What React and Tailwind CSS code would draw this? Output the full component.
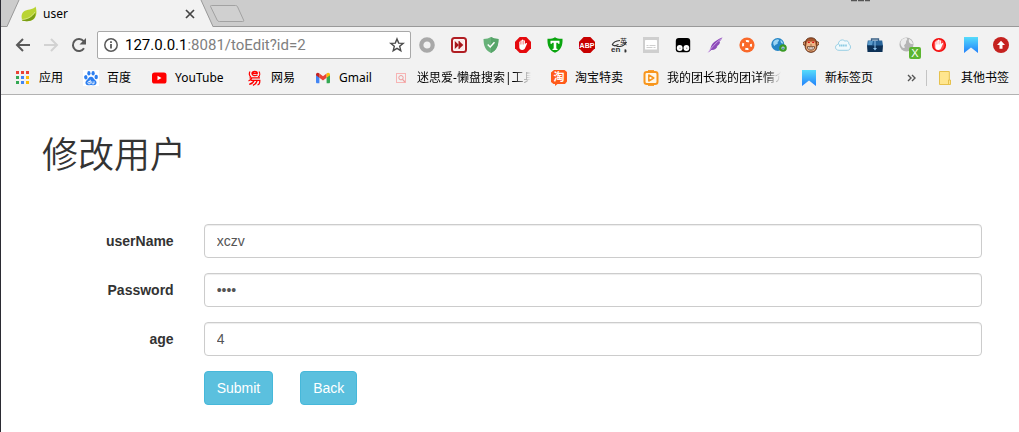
import { useState } from "react";

const Icon = ({ children, size = 16 }) => (
  <svg width={size} height={size} viewBox="0 0 16 16" className="shrink-0" aria-hidden="true">
    {children}
  </svg>
);

/* ---------- toolbar glyphs ---------- */

const BackArrow = ({ color = "#5a5a5a" }) => (
  <Icon>
    <path d="M15 8H2.5M8 2 2 8l6 6" fill="none" stroke={color} strokeWidth="2" />
  </Icon>
);
const ForwardArrow = () => (
  <Icon>
    <path d="M1 8h12.5M8 2l6 6-6 6" fill="none" stroke="#d2d2d2" strokeWidth="2" />
  </Icon>
);
const Reload = () => (
  <Icon>
    <path d="M13 11.2A6 6 0 1 1 12.6 4.2" fill="none" stroke="#5a5a5a" strokeWidth="2" />
    <path d="M15 1v6.5H8.5z" fill="#5a5a5a" />
  </Icon>
);
const Info = () => (
  <Icon>
    <circle cx="8" cy="8" r="6.2" fill="none" stroke="#5a5a5a" strokeWidth="1.5" />
    <path d="M7.1 7h1.8v4.5H7.1zM7.1 4.3h1.8v1.6H7.1z" fill="#5a5a5a" />
  </Icon>
);
const Star = () => (
  <Icon>
    <path
      d="M8 1.9l1.7 4.2 4.5.3-3.5 2.9 1.1 4.4L8 11.3l-3.8 2.4 1.1-4.4L1.8 6.4l4.5-.3z"
      fill="none"
      stroke="#4a4a4a"
      strokeWidth="1.4"
    />
  </Icon>
);
const Leaf = () => (
  <Icon>
    <path d="M14.5.6c1.3 3.6 1.6 8.8-1.2 11.9-2.6 2.9-7 3.2-11.8 2.3-1.5-3-1.3-7 1.3-9.2C5.7 3.2 12 4.4 14.5.6z" fill="#b9d432" />
    <path d="M.7 13.6c4.3.3 9.6-1.2 13.7-7.4.3 3-.2 5-1.9 6.8-2.9 2.6-7 2.4-11 1.8z" fill="#7a9e14" />
    <path d="M.7 13.5c5-.2 10-2.2 13.3-7.5" fill="none" stroke="#e4eda4" strokeWidth=".7" />
  </Icon>
);

/* ---------- extension icons ---------- */

const Ring = () => (
  <Icon>
    <circle cx="8" cy="8" r="5.7" fill="#f2f2f2" stroke="#a9a9a9" strokeWidth="4.2" />
  </Icon>
);
const FastForward = () => (
  <Icon>
    <rect x="1" y="1" width="14" height="14" rx="2.5" fill="#fff" stroke="#b01e23" strokeWidth="2" />
    <rect x="2.6" y="2.6" width="10.8" height="10.8" rx="1" fill="#fbeaea" />
    <path d="M3.8 4 8 8l-4.2 4zM8 4l4.3 4L8 12z" fill="#a8161b" />
    <path d="M8 4v8" stroke="#a8161b" strokeWidth="1" />
  </Icon>
);
const Shield = () => (
  <Icon>
    <path d="M8 0c2 1.3 4.5 1.9 7.5 2-.1 6.3-1.5 11-7.5 14C2 13 .6 8.3.5 2 3.5 1.9 6 1.3 8 0z" fill="#67b279" />
    <path d="M8 0c2 1.3 4.5 1.9 7.5 2-.1 6.3-1.5 11-7.5 14z" fill="#58a56a" />
    <path d="M4.7 7.5 7.2 10l4.3-4.8" fill="none" stroke="#fff" strokeWidth="1.4" />
  </Icon>
);
const Hand = ({ pale }) => (
  <Icon>
    {pale ? (
      <circle cx="8" cy="8" r="6.3" fill="#ff4a4a" stroke="#f20d0d" strokeWidth="1.6" />
    ) : (
      <path d="M4.7 0h6.6L16 4.7v6.6L11.3 16H4.7L0 11.3V4.7z" fill="#e50a0e" />
    )}
    <path
      d="M4.3 7.6V5.1c0-.9 1.2-.9 1.2 0V4c0-1 1.4-1 1.4 0v-.8c0-1 1.5-1 1.5 0V4c0-1 1.5-1 1.5 0v3.3l.8-1c.8-.8 1.6-.2 1.2.6l-1.9 4.3c-.5 1.2-1.3 1.7-2.7 1.7-2.3 0-3-1.4-3-3z"
      fill="#fff"
    />
    <path d="M5.6 5v2.5M7 4v3.5M8.5 4v3.5" stroke={pale ? "#ff7777" : "#e50a0e"} strokeWidth=".4" />
  </Icon>
);
const GreenT = () => (
  <Icon>
    <path d="M.5 1.8C3.5 2 6 1.5 8 .3c2 1.2 4.5 1.7 7.5 1.5.4 6.5-1.5 11.5-7.5 14C2 13.3.1 8.3.5 1.8z" fill="#0aa50f" />
    <path d="M3.5 3.8h9v3h-1.4l-.4-1H9.3v5.7l1.2.5v1h-5v-1l1.2-.5V5.8H5.3l-.4 1H3.5z" fill="#fff" />
  </Icon>
);
const Abp = () => (
  <Icon>
    <path d="M4.7 0h6.6L16 4.7v6.6L11.3 16H4.7L0 11.3V4.7z" fill="#c70000" />
    <text x="8" y="10.500" textAnchor="middle" fontSize="7" fontWeight="700" fill="#fff" fontFamily="Liberation Sans, sans-serif">
      ABP
    </text>
  </Icon>
);
const Translate = () => (
  <Icon>
    <text x="0" y="15.300" fontSize="8" fontWeight="700" fill="#333" fontFamily="Liberation Sans, sans-serif">en</text>
    <text x="9" y="6.500" fontSize="7" fill="#222" fontFamily="Noto Sans CJK SC, sans-serif">英</text>
    <path d="M1.200 8C2 5.500 5 3.800 9 3.500M1.200 8 4 8.800l3.500-1.300M5.500 9.300c4 .8 8-.8 9.500-3.500l-2 .2" fill="none" stroke="#333" strokeWidth="1.200" />
    <path d="M13.500 12.500a1.500 1.500 0 1 1 0 2.800z" fill="#333" />
  </Icon>
);
const Caption = () => (
  <Icon>
    <path d="M0 0h16v16H0z" fill="#cfcfcf" />
    <rect x="2" y="3" width="12" height="9.500" rx=".6" fill="#fff" />
    <path d="M3.500 8.500h2m1 0h6M3.500 10.500h6m1 0h2" stroke="#cfcfcf" strokeWidth="1" />
  </Icon>
);
const Tamper = () => (
  <Icon>
    <rect x=".8" y="1" width="14.400" height="14.200" rx="3" fill="#000" />
    <circle cx="4.700" cy="11" r="2.900" fill="#fff" />
    <circle cx="11.400" cy="11" r="2.900" fill="#fff" />
    <circle cx="5" cy="11.300" r=".7" fill="#999" />
    <circle cx="11.700" cy="11.300" r=".7" fill="#999" />
  </Icon>
);
const Feather = () => (
  <Icon>
    <path d="M15.500.5c-2 .6-8.300 3.500-10.500 7C3.800 9.500 3.300 12 3.300 12l-2 3.500 3-2.600c3 .3 5.200-1.400 6.200-3.400l-1-.1c2-1 3.500-3 3.500-4.500l-.8.100c1.500-1.500 2.500-3 3.300-4.500z" fill="#8d4bb8" />
    <path d="M1 15.500C4 11 9 5.500 14.500 1.500" fill="none" stroke="#d9b3ef" strokeWidth=".8" />
  </Icon>
);
const OrangeReel = () => (
  <Icon>
    <circle cx="8" cy="8" r="7.600" fill="#f9692a" />
    <circle cx="8" cy="8" r="4" fill="none" stroke="#fff" strokeWidth="2" strokeDasharray="3.200 3.083" strokeDashoffset="1.600" />
  </Icon>
);
const Globe = () => (
  <Icon>
    <circle cx="6.800" cy="7.500" r="6.500" fill="#2686c6" />
    <path d="M2.500 4.500c2-2.300 5-2.700 5.500-1.500s-1.800 1.500-1.300 3-2.200 1-2.700 2.500-2.500-1.500-1.500-4zM9.500 3c1.200.6 2.600 2 2.800 3.500-1.500 0-3-.5-2.800-3.500z" fill="#9bd4f3" />
    <circle cx="12" cy="11" r="2.700" fill="#e8f3fa" stroke="#3a9a24" strokeWidth="2.200" />
    <path d="M12 9.700v2.500M10.700 11l1.300 1.300 1.300-1.300" fill="none" stroke="#2b6f9f" strokeWidth=".8" />
  </Icon>
);
const Monkey = () => (
  <Icon>
    <circle cx="2" cy="6.500" r="1.900" fill="#e3a071" stroke="#5b2c12" strokeWidth=".8" />
    <circle cx="14" cy="6.500" r="1.900" fill="#e3a071" stroke="#5b2c12" strokeWidth=".8" />
    <path d="M8 .8c4 0 5.500 2.200 5.500 5.200 1 3.500.5 9-5.500 9.400-6-.4-6.500-5.900-5.500-9.400C2.500 3 4 .8 8 .8z" fill="#a4552b" stroke="#542811" strokeWidth=".8" />
    <path d="M4 5c1-1.500 3-1.200 4 0 1-1.200 3-1.500 4 0 .5 1 .2 2 .8 3.500.6 3-1 6-4.800 6s-5.400-3-4.800-6C3.800 7 3.500 6 4 5z" fill="#eeb587" />
    <path d="M4.800 5.300h2M9.200 5.300h2" stroke="#d81010" strokeWidth="1.600" />
    <path d="M4.300 9.700h7.400c0 2-1.300 3.400-3.700 3.400s-3.700-1.400-3.700-3.400z" fill="#fff" stroke="#5b2c12" strokeWidth=".8" />
    <path d="M6.300 10v2.500M8 10v3M9.700 10v2.500M7 8h2" stroke="#5b2c12" strokeWidth=".5" />
  </Icon>
);
const Cloud = () => (
  <Icon>
    <path d="M4 13.300c-2.200 0-3.500-1.400-3.500-3s1.300-2.900 2.800-2.900c0-2.500 1.700-4.500 4-4.500 1.200 0 2 .5 2.600 1.200 2.600-1 4.200 1 3.900 3 1 .5 1.700 1.600 1.700 2.900 0 2-1.300 3.300-3.200 3.300z" fill="#f0f9fc" stroke="#8fcbe2" strokeWidth=".9" />
    <path d="M4 8.500h8" stroke="#8ccbe3" strokeWidth="1.800" strokeDasharray="1.400 .4" />
  </Icon>
);
const BlueBox = () => (
  <Icon>
    <path d="M4.500 4.500V2h7v2.500" fill="none" stroke="#3a6187" strokeWidth="1.300" />
    <path d="M.8 3.500h14.400L16 9H0z" fill="#29659a" />
    <path d="M0 8.500h16l-.5 6.500H.5z" fill="#0d3156" />
    <path d="M1.500 4h4.500L5 8H1z" fill="#5b9bcb" />
    <path d="M7.500 4h1v7h1.500L8 13.500 6 11h1.500z" fill="#8fc4ec" />
  </Icon>
);
const GreyGlobe = () => (
  <span className="relative block h-4 w-4 shrink-0">
    <Icon>
      <circle cx="7.500" cy="7.500" r="7" fill="#b5b5b5" />
      <path d="M2 4c2-3 5-3.500 6-2.500S6.500 4 7 5.500 4 8 5.500 9.500 4 11.500 3 10 .8 6 2 4zM10 2c2 .8 3.500 2.500 4 5-2 .5-5-1-4-5z" fill="#ededed" />
    </Icon>
    <span className="absolute left-[10px] top-[10px] flex h-3 w-3 items-center justify-center rounded-[2px] bg-[#5cb531] font-['Liberation_Sans',sans-serif] text-[11px] leading-none text-white">
      X
    </span>
  </span>
);
const Ribbon = () => (
  <Icon>
    <defs>
      <linearGradient id="ribbon" x1="0" y1="0" x2="0" y2="1">
        <stop offset="0" stopColor="#56dcfb" />
        <stop offset="1" stopColor="#2180fb" />
      </linearGradient>
    </defs>
    <path d="M1 0h14v16l-7-5.500L1 16z" fill="url(#ribbon)" />
  </Icon>
);
const UpdateArrow = () => (
  <Icon>
    <circle cx="8" cy="8" r="8" fill="#c5221f" />
    <path d="M8 3.800 12 8H9.500v3.700h-3V8H4z" fill="#fff" />
  </Icon>
);

/* ---------- bookmark icons ---------- */

const appColors = ["#ea4335", "#ea4335", "#ea4335", "#34a853", "#4285f4", "#fbbc05", "#34a853", "#4285f4", "#fbbc05"];
const Apps = () => (
  <Icon>
    {appColors.map((c, i) => (
      <rect key={i} x={1 + (i % 3) * 5} y={1 + Math.floor(i / 3) * 5} width="3" height="3" fill={c} />
    ))}
  </Icon>
);
const Baidu = () => (
  <Icon>
    <path d="M0 0h16v16H0z" fill="#fff" />
    <g fill="#2d7ff0">
      <ellipse cx="2.800" cy="7.300" rx="1.700" ry="2.200" transform="rotate(-10 2.800 7.300)" />
      <ellipse cx="5.900" cy="3.300" rx="1.600" ry="2.300" />
      <ellipse cx="10.100" cy="3.300" rx="1.600" ry="2.300" />
      <ellipse cx="13.200" cy="7" rx="1.700" ry="2.200" />
      <path d="M8 6.800c2.200 0 2.700 2.200 4.300 3.500 2.200 1.900 1.200 4.900-1.200 4.900-1.200 0-2-.3-3.100-.3s-1.900.3-3.100.3c-2.400 0-3.400-3-1.200-4.900C5.300 9 5.800 6.800 8 6.800z" />
    </g>
    <path d="M7.200 9.800v4H5.800c-1.300 0-1.300-2.300 0-2.300h1.400M8.800 11.300v1.600c0 .9.400.9 1 .9H11v-2.500" fill="none" stroke="#fff" strokeWidth=".9" />
  </Icon>
);
const YouTube = () => (
  <Icon>
    <rect x="1" y="2.500" width="14.500" height="11" rx="2.600" fill="#f00" />
    <path d="M6.500 5.700v4.600l4-2.300z" fill="#fff" />
  </Icon>
);
const NetEase = () => (
  <Icon>
    <g fill="none" stroke="#f00" strokeWidth="1.400">
      <path d="M5 3.300h5.200c.3-2.600-5-2.600-5.200.2 0 2.400 3.500 2.600 5.500 1.400" />
      <path d="M3 1.500C1.800 3.500 2.300 6 4 7M12 1.500c1.200 2 .8 4.500-.8 5.500" strokeWidth="1.200" />
      <path d="M2.500 7.800h10.500M4.800 8c-.5 1.400-1.800 2.500-3.300 2.800M3.800 10.300h9c.1 2.700-.4 4.400-2.300 4.600M7 10.500c-.6 1.800-2.200 3.200-4.800 3.900M10.200 10.500c-.5 2-2 3.900-4.300 4.800" strokeWidth="1.300" />
    </g>
  </Icon>
);
const Gmail = () => (
  <Icon>
    <path d="M1 4.500V12c0 .8.500 1.300 1.200 1.300h2.200V7z" fill="#4285f4" />
    <path d="M15 4.500V12c0 .8-.5 1.300-1.200 1.300h-2.200V7z" fill="#34a853" />
    <path d="M4.400 3.500 8 6.300l3.600-2.800v4.200L8 10.500 4.400 7.700z" fill="#ea4335" />
    <path d="M1 4.600c0-1.900 2-2.700 3.400-1.100v4.300L1 5.300z" fill="#c5221f" />
    <path d="M15 4.600c0-1.900-2-2.700-3.400-1.100v4.300L15 5.300z" fill="#fbbc04" />
  </Icon>
);
const PinkSearch = () => (
  <Icon>
    <rect x="3.500" y="3.500" width="9" height="9" fill="none" stroke="#f7b4b4" />
    <circle cx="8" cy="7.700" r="2.200" fill="none" stroke="#ee9c9c" strokeWidth="1" />
    <path d="M9.500 9.300 12 12" stroke="#ee9c9c" strokeWidth="1.200" />
  </Icon>
);
const Taobao = () => (
  <Icon>
    <path d="M3 0h10.500L16 2v9.500L14 14H6.500L4 16v-2H2.500L0 12V2.500z" fill="#ff5a1a" />
    <text x="8" y="11" textAnchor="middle" fontSize="11" fontWeight="700" fill="#fff" fontFamily="Noto Sans CJK SC, sans-serif">
      淘
    </text>
  </Icon>
);
const OrangePlay = () => (
  <Icon>
    <rect x="1.500" y="2" width="13" height="12" rx="2.200" fill="#fff7e8" stroke="#f8961d" strokeWidth="2" />
    <path d="M5 .6h6M5 15.400h6" stroke="#f8961d" strokeWidth="1" />
    <path d="M5.800 5v6l5-3z" fill="#fff" stroke="#f8961d" strokeWidth="1.500" strokeLinejoin="round" />
  </Icon>
);
const Folder = () => (
  <Icon>
    <path d="M2.500 1.500h9.800V10h1.200v4.500h-11z" fill="#ffe68f" stroke="#e6c14d" />
    <path d="M11.500 14.500V10h1" fill="none" stroke="#e6c14d" />
  </Icon>
);

const extensions = [
  ["Recorder", Ring],
  ["Fast forward", FastForward],
  ["Shield", Shield],
  ["Blocker", Hand],
  ["Green T", GreenT],
  ["ABP", Abp],
  ["Translate", Translate],
  ["Captions", Caption],
  ["Scripts", Tamper],
  ["Feather", Feather],
  ["Reel", OrangeReel],
  ["Globe", Globe],
  ["Monkey", Monkey],
  ["Cloud", Cloud],
  ["Box", BlueBox],
  ["Proxy", GreyGlobe],
  ["Stop", () => <Hand pale />],
  ["Ribbon", Ribbon],
];

const fadedLabel = "w-[114px] overflow-hidden [mask-image:linear-gradient(to_right,black_85%,transparent)]";

const bookmarks = [
  ["应用", Apps],
  ["百度", Baidu],
  ["YouTube", YouTube, "min-w-[52px]"],
  ["网易", NetEase],
  ["Gmail", Gmail, "min-w-[34px]"],
  ["迷思爱-懒盘搜索|工具", PinkSearch, fadedLabel],
  ["淘宝特卖", Taobao],
  ["我的团长我的团详情介绍", OrangePlay, fadedLabel],
  ["新标签页", Ribbon],
];

function Bookmark({ label, Glyph, labelClass = "" }) {
  return (
    <a href="#" className="flex shrink-0 items-center gap-2 text-black">
      <Glyph />
      <span className={`whitespace-nowrap ${labelClass}`}>{label}</span>
    </a>
  );
}

function TabStrip() {
  return (
    <div className="flex h-[27px] items-start border-b border-[#999] bg-[#cccccc] pl-1.5">
      <div className="flex h-[27px] shrink-0">
        <svg width="13" height="27" viewBox="0 0 13 27" aria-hidden="true">
          <path d="M0 27 12 0h1v27z" fill="#f2f2f2" />
          <path d="M0 26.500 12 0" fill="none" stroke="#999" />
        </svg>
        <div className="flex w-[180px] items-center gap-1.5 bg-[#f2f2f2] pl-px pr-0.5 text-[12px] text-black">
          <Leaf />
          <span className="flex-1">user</span>
          <button aria-label="Close tab" className="flex">
            <Icon>
              <path d="m4 4 8 8M12 4l-8 8" stroke="#444" strokeWidth="1.700" />
            </Icon>
          </button>
        </div>
        <svg width="13" height="27" viewBox="0 0 13 27" aria-hidden="true">
          <path d="M0 0h1l12 27H0z" fill="#f2f2f2" />
          <path d="M1 0 13 26.500" fill="none" stroke="#999" />
        </svg>
      </div>
      <button aria-label="New tab" className="-ml-1 mt-1 flex">
        <svg width="37" height="20" viewBox="0 0 37 20" aria-hidden="true">
          <path d="M1.600 2.600Q1.200 1.500 2.500 1.500H26.500q1.500 0 2 1.200l6.200 13.600q.4 1.200-1 1.200H10.500q-1.700 0-2.300-1.300z" fill="#d0d0d0" stroke="#a2a2a2" />
        </svg>
      </button>
      <div className="flex flex-1 justify-end pr-[147px]">
        <svg width="22" height="2" viewBox="0 0 22 2" aria-hidden="true">
          <path d="M1 .5h19" stroke="#555" strokeWidth="1.500" strokeDasharray="6 1" />
        </svg>
      </div>
    </div>
  );
}

function Toolbar() {
  return (
    <div className="flex h-9 items-center pl-2 pr-2.5">
      <button aria-label="Back" className="flex w-7 justify-center"><BackArrow /></button>
      <button aria-label="Forward" className="flex w-7 justify-center"><ForwardArrow /></button>
      <button aria-label="Reload" className="flex w-7 justify-center"><Reload /></button>
      <div className="ml-1 mr-2 flex h-7 min-w-0 flex-1 items-center rounded-[2px] border border-[#a9a9a9] bg-white px-[5px]">
        <Info />
        <div className="ml-1.5 flex-1 whitespace-nowrap font-[Roboto,sans-serif] text-[15px] leading-5 text-[#808080]">
          <span className="text-black">127.0.0.1</span>:8081/toEdit?id=2
        </div>
        <button aria-label="Bookmark this page" className="flex"><Star /></button>
      </div>
      <div className="flex shrink-0 gap-4">
        {extensions.map(([name, Glyph]) => (
          <button key={name} aria-label={name} className="flex"><Glyph /></button>
        ))}
      </div>
      <button aria-label="Menu" className="ml-3.5 flex"><UpdateArrow /></button>
    </div>
  );
}

function BookmarkBar() {
  return (
    <div className="flex h-8 items-center border-b border-[#b2b2b2] pb-0.5 pl-3.5 pr-2.5 text-[12px] leading-4">
      <nav className="flex flex-1 gap-5">
        {bookmarks.map(([label, Glyph, labelClass]) => (
          <Bookmark key={label} label={label} Glyph={Glyph} labelClass={labelClass} />
        ))}
      </nav>
      <button aria-label="More bookmarks" className="mr-1.5 flex">
        <Icon>
          <path d="m4 5 3 3-3 3M8 5l3 3-3 3" fill="none" stroke="#555" strokeWidth="1.400" />
        </Icon>
      </button>
      <div className="mr-2.5 h-4 w-px bg-[#c4c4c4]" />
      <Bookmark label="其他书签" Glyph={Folder} />
    </div>
  );
}

function Field({ id, label, type = "text", initial }) {
  const [value, setValue] = useState(initial);
  return (
    <div className="mb-[15px] flex">
      <label htmlFor={id} className="w-1/6 px-[15px] pt-[7px] text-right font-bold">
        {label}
      </label>
      <div className="w-5/6 px-[15px]">
        <input
          id={id}
          type={type}
          value={value}
          autoComplete="off"
          onChange={(e) => setValue(e.target.value)}
          className="block h-[34px] w-full rounded-sm border border-[#ccc] bg-white px-3 text-[#555] shadow-[inset_0_1px_1px_rgba(0,0,0,0.075)] outline-none focus:border-[#66afe9]"
        />
      </div>
    </div>
  );
}

const buttonClass = "h-[34px] rounded-sm border border-[#46b8da] bg-[#5bc0de] px-3 text-white";

export default function App() {
  return (
    <div className="min-h-screen border-l border-[#2b2b33] bg-white">
      <header className="bg-[#f2f2f2] font-['Noto_Sans','Noto_Sans_CJK_SC',sans-serif]">
        <TabStrip />
        <Toolbar />
        <BookmarkBar />
      </header>
      <main className="pb-6 pl-[26px] pr-[22px] pt-[41px] font-['Liberation_Sans','Noto_Sans_CJK_SC',sans-serif] text-[14px] leading-5 text-[#333]">
        <h1 className="mb-12 px-[15px] text-[36px] font-[350] leading-10">修改用户</h1>
        <form onSubmit={(e) => e.preventDefault()}>
          <Field id="userName" label="userName" initial="xczv" />
          <Field id="password" label="Password" type="password" initial="abcd" />
          <Field id="age" label="age" initial="4" />
          <div className="flex">
            <div className="ml-[16.6667%] flex gap-[27px] px-[15px]">
              <button type="submit" className={buttonClass}>Submit</button>
              <button type="button" className={buttonClass}>Back</button>
            </div>
          </div>
        </form>
      </main>
    </div>
  );
}
